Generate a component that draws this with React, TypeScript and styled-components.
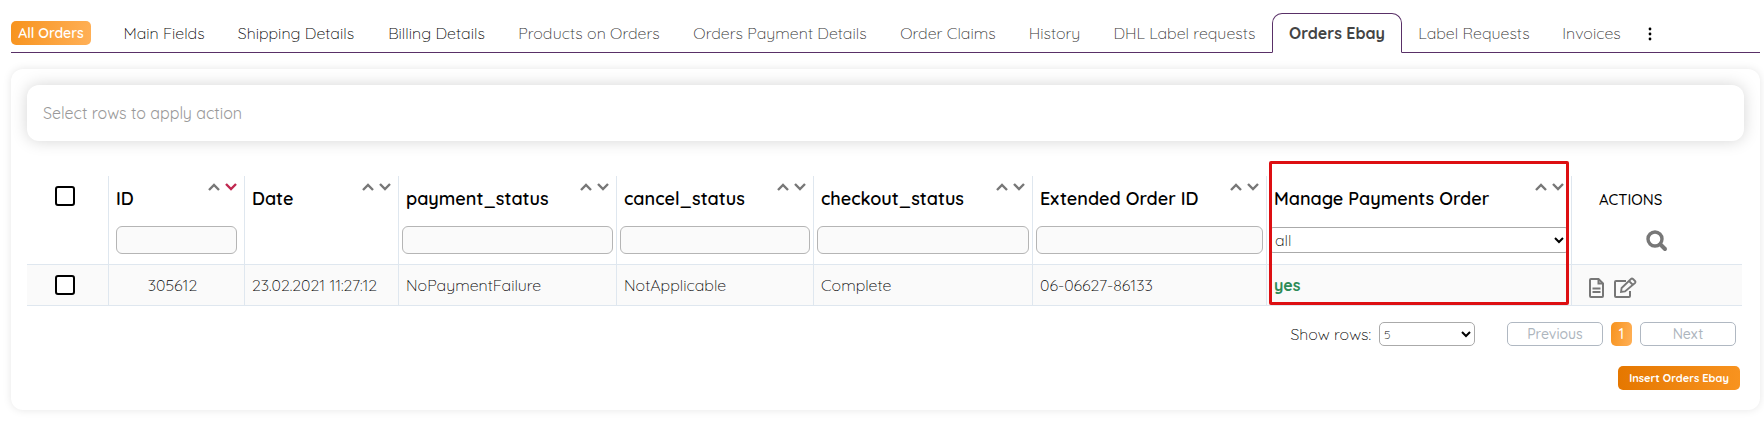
import React from "react";
import styled, { createGlobalStyle, css } from "styled-components";

const Global = createGlobalStyle`
  * { box-sizing: border-box; }
  body {
    margin: 0;
    background: #fff;
    color: #000;
    font-family: Quicksand, Lato, sans-serif;
    font-size: 16px;
    font-weight: 300;
    line-height: 24px;
  }
  button, input, select { font: inherit; color: inherit; margin: 0; }
`;

const Page = styled.div`
  padding: 13px 4px 14px 11px;
`;

const TabBar = styled.nav`
  display: flex;
  align-items: stretch;
  height: 40px;
`;

const underline = css`
  border-bottom: 1px solid #593067;
`;

const Lead = styled.div`
  ${underline}
  display: flex;
  align-items: center;
  width: 96px;
`;

const AllOrders = styled.button`
  width: 80px;
  height: 24px;
  padding: 0;
  border: 0;
  border-radius: 5px;
  background: linear-gradient(100deg, #f7931e, #ffb057);
  color: #fff;
  font-size: 14px;
  font-weight: 600;
  line-height: 24px;
`;

const Tab = styled.a<{ $width: number; $tone?: "dark" | "active" }>`
  ${underline}
  flex: 0 1 ${(p) => p.$width}px;
  padding-top: 8px;
  color: ${(p) => (p.$tone === "dark" ? "#000" : "#333")};
  text-align: center;
  text-decoration: none;
  white-space: nowrap;
  ${(p) =>
    p.$tone === "active" &&
    css`
      padding-top: 7px;
      border: 1px solid #593067;
      border-bottom-color: #fff;
      border-radius: 10px 10px 0 0;
      color: #444;
      font-weight: 700;
    `}
`;

const More = styled.button`
  ${underline}
  flex: 1;
  padding: 2px 0 0 9px;
  border-width: 0 0 1px;
  background: none;
  color: #000;
  display: flex;
  align-items: center;
`;

const Panel = styled.main`
  margin-top: 16px;
  padding: 16px 16px 20px;
  border-radius: 12px;
  background: #fff;
  box-shadow: 0 0 8px rgba(0, 0, 0, 0.1);
`;

const ActionBar = styled.div`
  padding: 16px;
  border-radius: 12px;
  background: #fff;
  box-shadow: 0 0 16px rgba(0, 0, 0, 0.17);
  color: #999;
  font-weight: 400;
`;

const Grid = styled.table`
  width: calc(100% - 2px);
  margin-top: 35px;
  border-collapse: separate;
  border-spacing: 0;
  table-layout: fixed;
`;

const HeadCell = styled.th<{ $last?: boolean }>`
  position: relative;
  height: 89px;
  padding: 0;
  border-right: ${(p) => (p.$last ? 0 : 1)}px solid #dfe7ef;
  border-bottom: 1px solid #dfe7ef;
  vertical-align: top;
  text-align: left;
  color: #000;
  font-weight: 600;
`;

const Sort = styled.div`
  display: flex;
  justify-content: flex-end;
  gap: 5px;
  height: 12px;
  padding: 7px 7px 0 0;
`;

const SortButton = styled.button<{ $on?: boolean }>`
  display: block;
  width: 12px;
  height: 8px;
  padding: 0;
  border: 0;
  background: none;
  color: ${(p) => (p.$on ? "#c02850" : "#777")};
  svg { display: block; }
`;

const Title = styled.div`
  padding: 0 0 0 7px;
  font-size: 18px;
  line-height: 22px;
  white-space: nowrap;
`;

const FilterWrap = styled.div<{ $inset?: boolean }>`
  padding: 16px ${(p) => (p.$inset ? 7 : 3)}px 0;
`;

const Filter = styled.input`
  display: block;
  width: 100%;
  height: 28px;
  padding: 0 6px;
  border: 1px solid #b5b5b5;
  border-radius: 6px;
  background: #fafafa;
`;

const Picker = styled.select<{ $small?: boolean }>`
  display: block;
  width: ${(p) => (p.$small ? "96px" : "100%")};
  height: ${(p) => (p.$small ? 24 : 26)}px;
  margin-top: ${(p) => (p.$small ? 0 : 1)}px;
  padding: 0;
  border: 1px solid #aaa;
  border-radius: ${(p) => (p.$small ? 5 : 3)}px;
  background: #fff;
  color: #000;
  font-size: ${(p) => (p.$small ? 12 : 16)}px;
  font-weight: 300;
  line-height: 20px;
`;

const Check = styled.input`
  appearance: none;
  display: block;
  width: 20px;
  height: 20px;
  margin: 10px auto;
  border: 2px solid #000;
  border-radius: 3px;
  background: #fff;
  &:checked { background: #000; }
`;

const CheckWrap = styled.div`
  padding-right: 6px;
`;

const Cell = styled.td<{ $center?: boolean; $last?: boolean }>`
  height: 41px;
  padding: 0 ${(p) => (p.$center ? 15 : 7)}px 0 7px;
  border-right: ${(p) => (p.$last ? 0 : 1)}px solid #dfe7ef;
  border-bottom: 1px solid #dfe7ef;
  background: #fafafa;
  text-align: ${(p) => (p.$center ? "center" : "left")};
  white-space: nowrap;
`;

const CheckCell = styled(Cell)`
  padding: 0;
`;

const Yes = styled.strong`
  color: #2e8b57;
  font-weight: 700;
`;

const Highlight = styled.div`
  position: absolute;
  z-index: 1;
  inset: -15px 2px -41px 2px;
  border: 3px solid #dd0f12;
  border-radius: 2px;
  pointer-events: none;
`;

const ActionsTitle = styled.div`
  padding: 14px 0 0 27px;
  font-size: 15px;
  font-weight: 500;
  line-height: 20px;
`;

const IconButton = styled.button`
  display: block;
  padding: 0;
  border: 0;
  background: none;
  color: #777;
  svg { display: block; }
`;

const SearchWrap = styled.div`
  display: flex;
  justify-content: center;
  padding-top: 20px;
`;

const RowActions = styled.div`
  display: flex;
  gap: 8px;
  padding: 6px 0 0 9px;
`;

const Pager = styled.div`
  display: flex;
  justify-content: flex-end;
  align-items: center;
  gap: 8px;
  padding: 16px 8px 0 0;
`;

const Spacer = styled.span`
  width: 16px;
`;

const PageButton = styled.button<{ $current?: boolean }>`
  width: ${(p) => (p.$current ? 21 : 96)}px;
  height: 24px;
  padding: 0;
  border: ${(p) => (p.$current ? "0" : "1px solid #b0b8c2")};
  border-radius: 5px;
  background: ${(p) => (p.$current ? "linear-gradient(100deg, #f7931e, #ffb057)" : "#fff")};
  color: ${(p) => (p.$current ? "#fff" : "#adb5bd")};
  font-size: 14px;
  font-weight: 500;
  line-height: 20px;
`;

const Footer = styled.div`
  display: flex;
  justify-content: flex-end;
  padding: 20px 4px 0 0;
`;

const Insert = styled.button`
  width: 122px;
  height: 24px;
  padding: 0;
  border: 0;
  border-radius: 5px;
  background: linear-gradient(90deg, #e57700, #f8931f);
  color: #fff;
  font-size: 11px;
  font-weight: 700;
  line-height: 24px;
`;

const tabs: { name: string; width: number; tone?: "dark" | "active" }[] = [
  { name: "Main Fields", width: 114, tone: "dark" },
  { name: "Shipping Details", width: 150, tone: "dark" },
  { name: "Billing Details", width: 131, tone: "dark" },
  { name: "Products on Orders", width: 174 },
  { name: "Orders Payment Details", width: 208 },
  { name: "Order Claims", width: 128 },
  { name: "History", width: 85 },
  { name: "DHL Label requests", width: 175 },
  { name: "Orders Ebay", width: 130, tone: "active" },
  { name: "Label Requests", width: 144 },
  { name: "Invoices", width: 91 },
];

type Column = { name: string; width: number; filter: "input" | "select" | "none"; value: string; sorted?: boolean };

const columns: Column[] = [
  { name: "ID", width: 136, filter: "input", value: "305612", sorted: true },
  { name: "Date", width: 154, filter: "none", value: "23.02.2021 11:27:12" },
  { name: "payment_status", width: 218, filter: "input", value: "NoPaymentFailure" },
  { name: "cancel_status", width: 197, filter: "input", value: "NotApplicable" },
  { name: "checkout_status", width: 219, filter: "input", value: "Complete" },
  { name: "Extended Order ID", width: 234, filter: "input", value: "06-06627-86133" },
  { name: "Manage Payments Order", width: 305, filter: "select", value: "yes" },
];

const Chevron = ({ d }: { d: string }) => (
  <svg width="12" height="8" viewBox="0 0 12 8" fill="none" stroke="currentColor" strokeWidth="2.4">
    <path d={d} />
  </svg>
);

export default function App() {
  return (
    <>
      <Global />
      <Page>
        <TabBar>
          <Lead>
            <AllOrders>All Orders</AllOrders>
          </Lead>
          {tabs.map((t) => (
            <Tab key={t.name} href="#" $width={t.width} $tone={t.tone}>
              {t.name}
            </Tab>
          ))}
          <More aria-label="More tabs">
            <svg width="8" height="14" viewBox="0 0 8 14" fill="currentColor">
              <circle cx="4" cy="2" r="1.4" />
              <circle cx="4" cy="7" r="1.4" />
              <circle cx="4" cy="12" r="1.4" />
            </svg>
          </More>
        </TabBar>
        <Panel>
          <ActionBar>Select rows to apply action</ActionBar>
          <Grid>
            <colgroup>
              <col width={82} />
              {columns.map((c) => (
                <col key={c.name} width={c.width} />
              ))}
              <col width={170} />
            </colgroup>
            <thead>
              <tr>
                <HeadCell>
                  <CheckWrap>
                    <Check type="checkbox" aria-label="Select all rows" />
                  </CheckWrap>
                </HeadCell>
                {columns.map((c) => (
                  <HeadCell key={c.name}>
                    <Sort>
                      <SortButton aria-label={`Sort ${c.name} ascending`}>
                        <Chevron d="M1 7L6 2L11 7" />
                      </SortButton>
                      <SortButton $on={c.sorted} aria-label={`Sort ${c.name} descending`}>
                        <Chevron d="M1 1L6 6L11 1" />
                      </SortButton>
                    </Sort>
                    <Title>{c.name}</Title>
                    {c.filter !== "none" && (
                      <FilterWrap $inset={c.name === "ID"}>
                        {c.filter === "input" ? (
                          <Filter type="text" aria-label={`Filter ${c.name}`} />
                        ) : (
                          <Picker aria-label={`Filter ${c.name}`}>
                            <option>all</option>
                            <option>yes</option>
                            <option>no</option>
                          </Picker>
                        )}
                      </FilterWrap>
                    )}
                    {c.filter === "select" && <Highlight />}
                  </HeadCell>
                ))}
                <HeadCell $last>
                  <ActionsTitle>ACTIONS</ActionsTitle>
                  <SearchWrap>
                    <IconButton aria-label="Search">
                      <svg width="22" height="22" viewBox="0 0 22 22" fill="none" stroke="currentColor">
                        <circle cx="9" cy="9" r="7" strokeWidth="3.4" />
                        <path d="M14.5 14.5L19 19" strokeWidth="4" strokeLinecap="round" />
                      </svg>
                    </IconButton>
                  </SearchWrap>
                </HeadCell>
              </tr>
            </thead>
            <tbody>
              <tr>
                <CheckCell>
                  <CheckWrap>
                    <Check type="checkbox" aria-label="Select order 305612" />
                  </CheckWrap>
                </CheckCell>
                {columns.map((c) => (
                  <Cell key={c.name} $center={c.name === "ID"}>
                    {c.filter === "select" ? <Yes>{c.value}</Yes> : c.value}
                  </Cell>
                ))}
                <Cell $last>
                  <RowActions>
                    <IconButton aria-label="View document">
                      <svg width="17" height="22" viewBox="0 0 17 22" fill="none" stroke="currentColor" strokeWidth="2">
                        <path d="M3 2H10.5L15 6.5V19Q15 20 14 20H3Q2 20 2 19V3Q2 2 3 2Z" />
                        <path d="M10.5 2V6.5H15M4.5 11.5H12.5M4.5 15H12.5" />
                      </svg>
                    </IconButton>
                    <IconButton aria-label="Edit order">
                      <svg width="24" height="22" viewBox="0 0 24 22" fill="none" stroke="currentColor" strokeWidth="2">
                        <path d="M13 4H3Q2 4 2 5V19Q2 20 3 20H16Q17 20 17 19V14" />
                        <path d="M8 15L8.6 11L18 2Q19 1 20 2L22 4Q23 5 22 6L12 14.5ZM16 4L20 8" strokeWidth="1.8" />
                      </svg>
                    </IconButton>
                  </RowActions>
                </Cell>
              </tr>
            </tbody>
          </Grid>
          <Pager>
            <label htmlFor="rows">Show rows:</label>
            <Picker id="rows" $small>
              <option>5</option>
              <option>10</option>
            </Picker>
            <Spacer />
            <PageButton>Previous</PageButton>
            <PageButton $current>1</PageButton>
            <PageButton>Next</PageButton>
          </Pager>
          <Footer>
            <Insert>Insert Orders Ebay</Insert>
          </Footer>
        </Panel>
      </Page>
    </>
  );
}
